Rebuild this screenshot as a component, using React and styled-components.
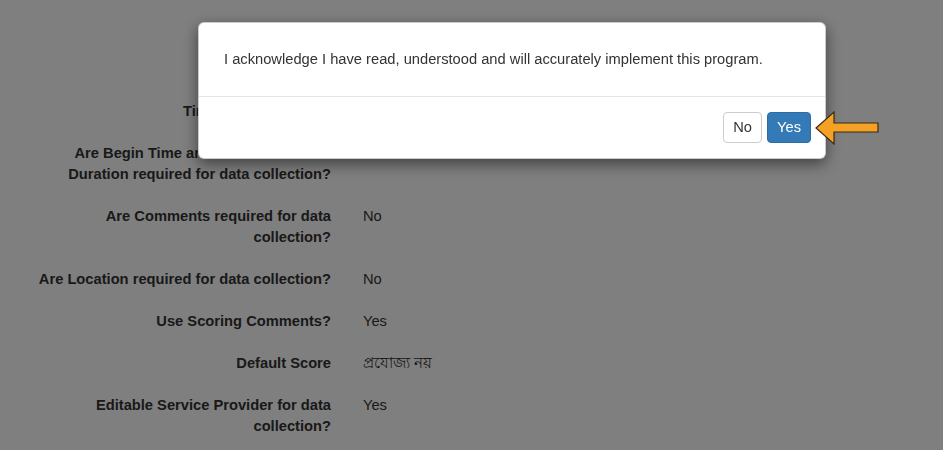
import React from 'react';
import styled, { createGlobalStyle } from 'styled-components';

const GlobalStyle = createGlobalStyle`
  html, body {
    margin: 0;
    padding: 0;
    background: #fff;
  }
  body {
    font-family: "Liberation Sans", Arial, "Noto Sans", sans-serif;
    font-size: 14.7px;
    color: #333;
  }
`;

const Page = styled.div`
  width: 943px;
  height: 450px;
  overflow: hidden;
  position: relative;
`;

// program details behind the modal
const Details = styled.dl`
  margin: 0;
  padding: 101px 0 0 34px;
  display: grid;
  grid-template-columns: 297px 1fr;
  column-gap: 32px;
  row-gap: 21px;
  line-height: 21px;
`;

const Label = styled.dt`
  font-weight: bold;
  text-align: right;
  color: #333;
`;

const Value = styled.dd`
  margin: 0;
  color: #333;
`;

const Backdrop = styled.div`
  position: fixed;
  inset: 0;
  background: rgba(0, 0, 0, 0.5);
  padding: 22px 0 0 198px;
`;

const Dialog = styled.div`
  width: 628px;
  box-sizing: border-box;
  background: #fff;
  border: 1px solid rgba(0, 0, 0, 0.2);
  border-radius: 6px;
  box-shadow: 0 5px 15px rgba(0, 0, 0, 0.5);
`;

const DialogBody = styled.div`
  padding: 26px 25px 27px;
  line-height: 20px;
  color: #333;
`;

const DialogFooter = styled.div`
  border-top: 1px solid #e5e5e5;
  padding: 15px 14px 15px;
  display: flex;
  justify-content: flex-end;
  gap: 5px;
`;

const Button = styled.button`
  font-family: inherit;
  font-size: 14.7px;
  line-height: 19px;
  padding: 5px 9px;
  border-radius: 4px;
  border: 1px solid ${p => (p.primary ? '#2e6da4' : '#ccc')};
  background: ${p => (p.primary ? '#337ab7' : '#fff')};
  color: ${p => (p.primary ? '#fff' : '#333')};
  cursor: pointer;
`;

const Pointer = styled.svg`
  position: absolute;
  left: 812px;
  top: 108px;
`;

const rows = [
  ['Time Recording Type', ''],
  ['Are Begin Time and End Time and/or Duration required for data collection?', ''],
  ['Are Comments required for data collection?', 'No'],
  ['Are Location required for data collection?', 'No'],
  ['Use Scoring Comments?', 'Yes'],
  ['Default Score', 'প্রযোজ্য নয়'],
  ['Editable Service Provider for data collection?', 'Yes'],
];

export default function App() {
  return (
    <Page>
      <GlobalStyle />
      <Details>
        {rows.map(([label, value]) => (
          <React.Fragment key={label}>
            <Label>{label}</Label>
            <Value>{value}</Value>
          </React.Fragment>
        ))}
      </Details>
      <Backdrop>
        <Dialog>
          <DialogBody>
            I acknowledge I have read, understood and will accurately implement this program.
          </DialogBody>
          <DialogFooter>
            <Button>No</Button>
            <Button primary>Yes</Button>
          </DialogFooter>
        </Dialog>
      </Backdrop>
      <Pointer width="72" height="42" viewBox="0 0 72 42">
        <polygon
          points="4,20 22,4 22,15 66,15 66,24 22,24 22,36"
          fill="#f5a125"
          stroke="#3b2a12"
          strokeWidth="1.2"
          strokeLinejoin="miter"
        />
      </Pointer>
    </Page>
  );
}
